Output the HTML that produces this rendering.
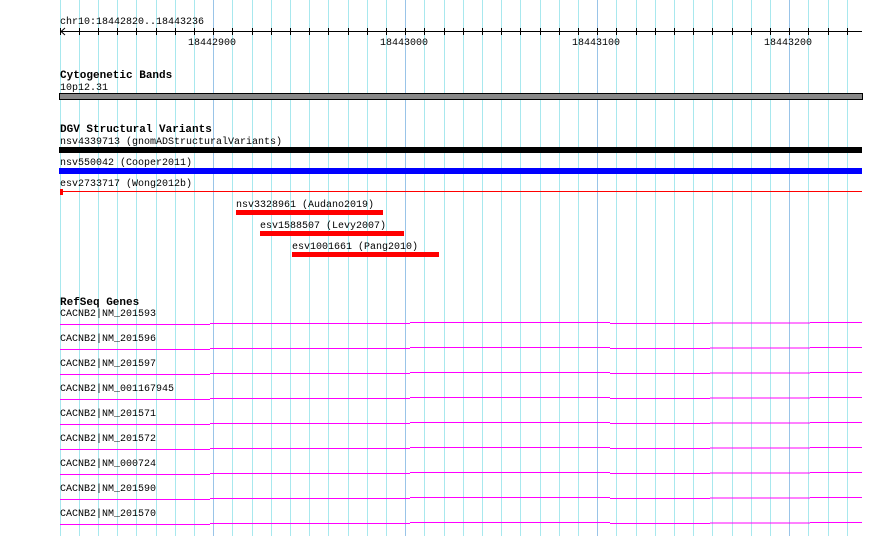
<!DOCTYPE html>
<html><head><style>
html,body{margin:0;padding:0;background:#fff;}
svg{display:block;}
text{font-family:"Liberation Mono",monospace;font-size:10px;fill:#000;}
.b{font-weight:bold;font-size:11px;}
</style></head><body>
<svg width="890" height="536" xmlns="http://www.w3.org/2000/svg">
<g stroke="#a8e8ee" stroke-width="1" id="grid">
</g>
<script>
var g=document.getElementById('grid'),ns='http://www.w3.org/2000/svg';
for(var i=0;i<=41;i++){var x=Math.round(59.6+i*19.2)+0.5;if(x>862)break;var l=document.createElementNS(ns,'line');l.setAttribute('x1',x);l.setAttribute('x2',x);l.setAttribute('y1',0);l.setAttribute('y2',536);if(i%10==8)l.setAttribute('stroke','#99c4e8');g.appendChild(l);}
</script>
<!-- ruler -->
<text x="60" y="24">chr10:18442820..18443236</text>
<line x1="60" y1="31.5" x2="862" y2="31.5" stroke="#000"/>
<polyline points="65,28 61,31.5 65,35" fill="none" stroke="#000"/>
<g stroke="#000" id="ticks"></g>
<script>
var t=document.getElementById('ticks');
for(var i=0;i<=41;i++){var x=Math.round(59.6+i*19.2)+0.5;if(x>862)break;var l=document.createElementNS(ns,'line');l.setAttribute('x1',x);l.setAttribute('x2',x);l.setAttribute('y1',28);l.setAttribute('y2',35);t.appendChild(l);}
</script>
<text x="188" y="45">18442900</text>
<text x="380" y="45">18443000</text>
<text x="572" y="45">18443100</text>
<text x="764" y="45">18443200</text>
<!-- cyto -->
<text class="b" x="60" y="78">Cytogenetic Bands</text>
<text x="60" y="90">10p12.31</text>
<rect x="59.5" y="93.5" width="803" height="6" fill="#888" stroke="#000"/>
<!-- DGV -->
<text class="b" x="60" y="132">DGV Structural Variants</text>
<text x="60" y="144">nsv4339713 (gnomADStructuralVariants)</text>
<rect x="59" y="147" width="803" height="6" fill="#000"/>
<text x="60" y="165">nsv550042 (Cooper2011)</text>
<rect x="59" y="168" width="803" height="6" fill="#0000ff"/>
<text x="60" y="186">esv2733717 (Wong2012b)</text>
<line x1="60" y1="191.5" x2="862" y2="191.5" stroke="#f00"/>
<rect x="60" y="189" width="3" height="6" fill="#f00"/>
<text x="236" y="207">nsv3328961 (Audano2019)</text>
<rect x="236" y="210" width="147" height="5" fill="#f00"/>
<text x="260" y="228">esv1588507 (Levy2007)</text>
<rect x="260" y="231" width="144" height="5" fill="#f00"/>
<text x="292" y="249">esv1001661 (Pang2010)</text>
<rect x="292" y="252" width="147" height="5" fill="#f00"/>
<!-- RefSeq -->
<text class="b" x="60" y="305">RefSeq Genes</text>
<g id="genes"></g>
<script>
var names=["CACNB2|NM_201593","CACNB2|NM_201596","CACNB2|NM_201597","CACNB2|NM_001167945","CACNB2|NM_201571","CACNB2|NM_201572","CACNB2|NM_000724","CACNB2|NM_201590","CACNB2|NM_201570"];
var gg=document.getElementById('genes');
var steps=[[60,210,0],[210,410,-1],[410,610,-2],[610,710,-1],[710,810,-1.5],[810,862,-2]];
names.forEach(function(n,i){var y=324+i*25;var tx=document.createElementNS(ns,'text');tx.setAttribute('x',60);tx.setAttribute('y',y-8);tx.textContent=n;gg.appendChild(tx);
steps.forEach(function(s){var l=document.createElementNS(ns,'line');l.setAttribute('x1',s[0]);l.setAttribute('x2',s[1]);l.setAttribute('y1',y+s[2]+0.5);l.setAttribute('y2',y+s[2]+0.5);l.setAttribute('stroke','#f0f');gg.appendChild(l);});});
</script>
</svg>
</body></html>
